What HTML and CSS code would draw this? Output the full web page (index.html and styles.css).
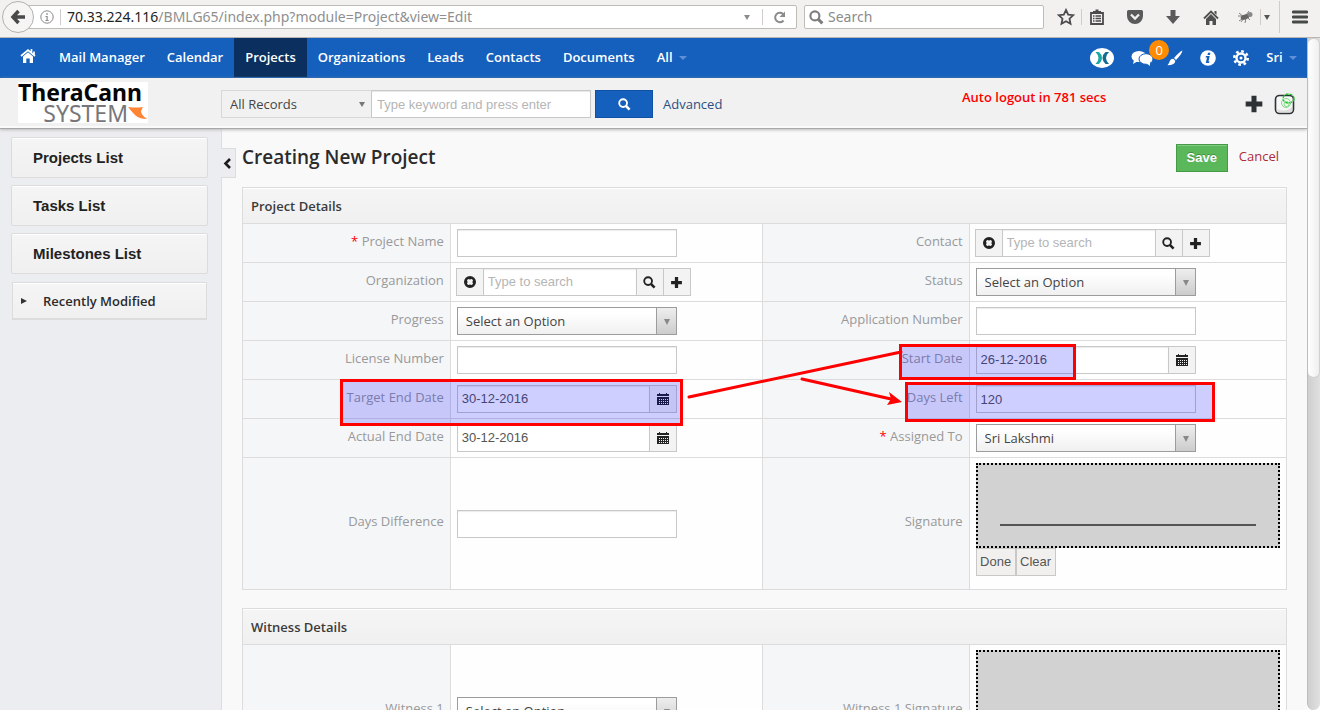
FILE: index.html
```html
<!DOCTYPE html>
<html lang="en">
<head>
<meta charset="utf-8">
<title>Creating New Project</title>
<link rel="stylesheet" href="styles.css">
</head>
<body>
<svg class="defs" aria-hidden="true">
  <symbol id="i-search" viewBox="0 0 14 14"><circle cx="5.5" cy="5.5" r="4.2" fill="none" stroke="currentColor" stroke-width="2"/><path d="M8.5 8.5L12.5 12.5" stroke="currentColor" stroke-width="2.8" fill="none"/></symbol>
  <symbol id="i-clear" viewBox="0 0 14 14"><path fill="currentColor" fill-rule="evenodd" d="M7 1a6 6 0 1 0 0 12A6 6 0 0 0 7 1zM4 5.2L5.2 4 7 4.6 8.8 4 10 5.2 9.4 7 10 8.8 8.8 10 7 9.4 5.2 10 4 8.8 4.6 7z"/></symbol>
  <symbol id="i-plus" viewBox="0 0 12 12"><path fill="currentColor" d="M4.5 1h3v3.5H11v3H7.5V11h-3V7.5H1v-3h3.5z"/></symbol>
  <symbol id="i-calendar" viewBox="0 0 14 14"><path fill="currentColor" d="M3 1h1v1h6V1h1v1h2v2H1V2h2zM1 5h12v8H1z"/><path stroke="#f3f3f3" stroke-width="1" stroke-dasharray="1 1" d="M3 7.500h9M3 9.500h9M3 11.500h9"/></symbol>
</svg>

<header class="toolbar">
  <button class="back" aria-label="Back"><svg width="16" height="16" viewBox="0 0 16 16"><path d="M8.500 2L3 8l5.500 6M3.500 8H15" fill="none" stroke="#4a4a4a" stroke-width="3.500"/></svg></button>
  <div class="address">
    <svg width="14" height="14" viewBox="0 0 14 14"><circle cx="7" cy="7" r="6.200" fill="none" stroke="#8a8a8a"/><path d="M6.300 3.200h1.500v1.500H6.300zM5.500 6h2.200v4h1v1H5.500v-1h1V7h-1z" fill="#8a8a8a"/></svg>
    <span class="rule"></span>
    <span class="url"><b>70.33.224.116</b>/BMLG65/index.php?module=Project&amp;view=Edit</span>
    <span class="tri"></span>
    <span class="rule"></span>
    <button class="plain" aria-label="Reload"><svg width="13" height="13" viewBox="0 0 13 13"><path d="M10.500 9.500A4.700 4.700 0 1 1 10 3" fill="none" stroke="#8b8b8b" stroke-width="2"/><path d="M12 .5v5.500H6.500z" fill="#8b8b8b"/></svg></button>
  </div>
  <label class="browser-search"><svg class="grey" width="15" height="15"><use href="#i-search"/></svg><input type="text" placeholder="Search" aria-label="Search the web"></label>
  <div class="tools">
    <button class="plain" aria-label="Bookmark"><svg width="18" height="18" viewBox="0 0 18 18"><path d="M9 2l2.200 4.600 5 .6-3.700 3.500 1 5L9 13.200l-4.500 2.500 1-5L1.800 7.200l5-.6z" fill="none" stroke="#4c4c4c" stroke-width="1.800"/></svg></button>
    <span class="rule"></span>
    <button class="plain wide" aria-label="Library"><svg width="16" height="16" viewBox="0 0 16 16"><path d="M2 4h12v11H2z" fill="none" stroke="#4c4c4c" stroke-width="1.800"/><path d="M4 2h2.500V.5h3V2H12v2H4z" fill="#4c4c4c"/><path d="M4 7h1.500M4 9.500h1.500M4 12h1.500M6.500 7H12M6.500 9.500H12M6.500 12H12" stroke="#4c4c4c" stroke-width="1.300"/></svg></button>
    <button class="plain wide" aria-label="Pocket"><svg width="18" height="16" viewBox="0 0 18 16"><path d="M2.500 1h13A1.500 1.500 0 0 1 17 2.500V7A8 8 0 0 1 1 7V2.500A1.500 1.500 0 0 1 2.500 1z" fill="#5a5a5a"/><path d="M5 5.500l4 4 4-4" fill="none" stroke="#f2f1f0" stroke-width="2.300"/></svg></button>
    <button class="plain wide" aria-label="Downloads"><svg width="16" height="16" viewBox="0 0 16 16"><path d="M5.500 1h5v6H15l-7 8-7-8h4.500z" fill="#5a5a5a"/></svg></button>
    <button class="plain wide" aria-label="Home"><svg width="18" height="17" viewBox="0 0 18 17"><path d="M2 9.500L9 2.500l7 7" fill="none" stroke="#4f4f4f" stroke-width="1.800"/><path d="M4 10l5-5 5 5v6h-3.500v-4h-3v4H4zM12.500 2h2v4l-2-2z" fill="#4f4f4f"/></svg></button>
    <button class="plain" aria-label="Add-on"><svg width="16" height="14" viewBox="0 0 16 14"><ellipse cx="7" cy="7" rx="4.500" ry="2.500" transform="rotate(-20 7 7)" fill="#666"/><circle cx="12" cy="4.500" r="2.500" fill="#888"/><path d="M1 3l5 4M0 6h6M3 12l4-5M7 13l1-5M12 10L9 7M4 9L1 11M8 5l3-4" stroke="#666" stroke-width=".8"/></svg></button>
    <span class="rule"></span>
    <span class="tri dark"></span>
    <span class="rule tall"></span>
    <button class="plain menu" aria-label="Menu"><svg width="16" height="14" viewBox="0 0 16 14"><path d="M1 2h14M1 7h14M1 12h14" stroke="#474b47" stroke-width="2.800" stroke-linecap="round"/></svg></button>
  </div>
</header>

<div class="viewport">
<div class="page">
  <nav class="nav">
    <a class="home" href="#" aria-label="Home"><svg width="16" height="16" viewBox="0 0 16 16"><path d="M1 8l7-6 7 6M11.500 1v4M14 3.500v3" fill="none" stroke="#fff" stroke-width="1.700"/><path d="M3 8.500l5-4.300 5 4.300V15H9.700v-4.500H6.300V15H3z" fill="#fff"/></svg></a>
    <a href="#">Mail Manager</a><a href="#">Calendar</a><a class="active" href="#">Projects</a><a href="#">Organizations</a><a href="#">Leads</a><a href="#">Contacts</a><a href="#">Documents</a><a href="#">All <i class="tri blue"></i></a>
    <div class="nav-icons">
      <a href="#" aria-label="Exchange"><svg width="24" height="20" viewBox="0 0 24 20"><ellipse cx="12" cy="10" rx="12" ry="10" fill="#fff"/><path d="M5.500 4H9q3 2.500 3 6t-3 6H5.500Q8.500 13 8.500 10T5.500 4z" fill="#1aa9a4"/><path d="M19 4h-3.500q-3 2.500-3 6t3 6H19q-3-3-3-6t3-6z" fill="#136b93"/></svg></a>
      <a class="chat" href="#" aria-label="Messages"><svg width="22" height="16" viewBox="0 0 22 16"><ellipse cx="8" cy="6.500" rx="7.500" ry="5.500" fill="#fff"/><path d="M3 10l-1 4 5-3z" fill="#fff"/><ellipse cx="15" cy="9" rx="7" ry="5.300" fill="#fff" stroke="#1560bd"/><path d="M15 13l4 3v-4z" fill="#fff"/></svg><span class="badge">0</span></a>
      <a href="#" aria-label="Theme"><svg width="16" height="16" viewBox="0 0 16 16"><path d="M15.500.5q-1 4-6.500 9.500L7 8Q12 2 15.500.5z" fill="#fff"/><path d="M6.300 8.700l2 2q0 4.300-7.800 4.600Q2.300 13 2.800 11q1-2.500 3.500-2.300z" fill="#fff"/></svg></a>
      <a href="#" aria-label="Information"><svg width="16" height="16" viewBox="0 0 16 16"><circle cx="8" cy="8" r="7.800" fill="#fff"/><path d="M8 2.800h2.400L10 5H7.500zM6 6h3.700l-1.200 5.500h1L9 13H5.800l1.200-5.500H5.500z" fill="#1560bd"/></svg></a>
      <a href="#" aria-label="Settings"><svg width="16" height="16" viewBox="0 0 16 16"><circle cx="8" cy="8" r="4.500" fill="none" stroke="#fff" stroke-width="2.400"/><circle cx="8" cy="8" r="6.700" fill="none" stroke="#fff" stroke-width="2.600" stroke-dasharray="2.630 2.630"/><circle cx="8" cy="8" r="1.500" fill="#fff"/></svg></a>
      <a class="user" href="#">Sri <i class="tri blue"></i></a>
    </div>
  </nav>

  <div class="search-bar">
    <div class="brand"><div class="logo"><span class="logo-top">TheraCann</span><span class="logo-sub">SYSTEM<svg width="20" height="14" viewBox="0 0 20 14"><path d="M0 1Q9 2 15 1L13 5Q13 9 19 13 11 13 7 9 4 6 0 1z" fill="#ff8433"/></svg></span></div></div>
    <div class="record-pick"><select aria-label="Record type"><option>All Records</option></select></div>
    <input class="keyword" type="text" placeholder="Type keyword and press enter" aria-label="Keyword">
    <button class="go" aria-label="Search"><svg width="13" height="13"><use href="#i-search"/></svg></button>
    <a class="advanced" href="#">Advanced</a>
    <strong class="logout">Auto logout in 781 secs</strong>
    <div class="quick">
      <button class="plain" aria-label="Quick create"><svg width="20" height="20"><use href="#i-plus"/></svg></button>
      <button class="plain" aria-label="Notebook"><svg width="22" height="22" viewBox="0 0 22 22"><rect x="1.500" y="2.500" width="18" height="18" rx="4" fill="#f7f7f7" stroke="#2d3236" stroke-width="1.600"/><path d="M3 16q8 4 15-2v5H4z" fill="#ddd"/><ellipse cx="14.500" cy="5.500" rx="5.500" ry="4.500" fill="none" stroke="#22c32e" stroke-width="1.400" stroke-dasharray="3 1"/><circle cx="12" cy="10" r="4.500" fill="none" stroke="#7bdc7f"/><circle cx="12.500" cy="11" r="2.500" fill="none" stroke="#7bdc7f"/></svg></button>
    </div>
  </div>

  <div class="body">
    <aside class="side">
      <a class="side-link" href="#">Projects List</a>
      <a class="side-link" href="#">Tasks List</a>
      <a class="side-link" href="#">Milestones List</a>
      <button class="recent"><i></i>Recently Modified</button>
    </aside>
    <main class="main">
      <button class="collapse" aria-label="Collapse sidebar"><svg width="9" height="13" viewBox="0 0 9 13"><path d="M7 2L2.500 6.500 7 11" fill="none" stroke="#1c1c1c" stroke-width="2.600"/></svg></button>
      <form>
        <div class="title-row"><h1>Creating New Project</h1><button class="save" type="button">Save</button><a class="cancel" href="#">Cancel</a></div>

        <section class="panel">
          <h2>Project Details</h2>
          <table>
            <colgroup><col class="c1"><col class="c2"><col class="c3"><col></colgroup>
            <tr>
              <th><label for="name"><em>*</em> Project Name</label></th><td><input class="field" id="name" type="text"></td>
              <th><label for="contact">Contact</label></th><td><div class="lookup"><button type="button" aria-label="Clear contact"><svg width="14" height="14"><use href="#i-clear"/></svg></button><input id="contact" type="text" placeholder="Type to search"><button type="button" aria-label="Find contact"><svg width="13" height="13"><use href="#i-search"/></svg></button><button type="button" aria-label="Add contact"><svg width="13" height="13"><use href="#i-plus"/></svg></button></div></td>
            </tr>
            <tr>
              <th><label for="org">Organization</label></th><td><div class="lookup"><button type="button" aria-label="Clear organization"><svg width="14" height="14"><use href="#i-clear"/></svg></button><input id="org" type="text" placeholder="Type to search"><button type="button" aria-label="Find organization"><svg width="13" height="13"><use href="#i-search"/></svg></button><button type="button" aria-label="Add organization"><svg width="13" height="13"><use href="#i-plus"/></svg></button></div></td>
              <th><label for="status">Status</label></th><td><div class="pick"><select id="status"><option>Select an Option</option></select></div></td>
            </tr>
            <tr>
              <th><label for="progress">Progress</label></th><td><div class="pick"><select id="progress"><option>Select an Option</option></select></div></td>
              <th><label for="appno">Application Number</label></th><td><input class="field" id="appno" type="text"></td>
            </tr>
            <tr>
              <th><label for="license">License Number</label></th><td><input class="field" id="license" type="text"></td>
              <th><label for="start">Start Date</label></th><td><div class="date"><input id="start" type="text" value="26-12-2016"><button type="button" aria-label="Pick start date"><svg width="14" height="14"><use href="#i-calendar"/></svg></button></div></td>
            </tr>
            <tr>
              <th><label for="target">Target End Date</label></th><td><div class="date"><input id="target" type="text" value="30-12-2016"><button type="button" aria-label="Pick target end date"><svg width="14" height="14"><use href="#i-calendar"/></svg></button></div></td>
              <th><label for="left">Days Left</label></th><td><input class="field" id="left" type="text" value="120"></td>
            </tr>
            <tr>
              <th><label for="actual">Actual End Date</label></th><td><div class="date"><input id="actual" type="text" value="30-12-2016"><button type="button" aria-label="Pick actual end date"><svg width="14" height="14"><use href="#i-calendar"/></svg></button></div></td>
              <th><label for="owner"><em>*</em> Assigned To</label></th><td><div class="pick"><select id="owner"><option>Sri Lakshmi</option></select></div></td>
            </tr>
            <tr>
              <th><label for="diff">Days Difference</label></th><td><input class="field" id="diff" type="text"></td>
              <th>Signature</th><td><div class="pad"></div><div class="pad-actions"><button type="button">Done</button><button type="button">Clear</button></div></td>
            </tr>
          </table>
          <div class="mark mark-target"></div>
          <div class="mark mark-start"></div>
          <div class="mark mark-left"></div>
          <svg class="arrows" width="220" height="60" viewBox="0 0 220 60"><path d="M4 49L216 4M117 31L206 51" fill="none" stroke="#f00" stroke-width="3" stroke-linecap="round"/><path d="M217 54l-15 3 4-6-2-7z" fill="#f00"/></svg>
        </section>

        <section class="panel">
          <h2>Witness Details</h2>
          <table>
            <colgroup><col class="c1"><col class="c2"><col class="c3"><col></colgroup>
            <tr>
              <th><label for="w1">Witness 1</label></th><td><div class="pick"><select id="w1"><option>Select an Option</option></select></div></td>
              <th>Witness 1 Signature</th><td><div class="pad"></div><div class="pad-actions"><button type="button">Done</button><button type="button">Clear</button></div></td>
            </tr>
          </table>
        </section>
      </form>
    </main>
  </div>
</div>
<div class="scroll"><div class="thumb"></div></div>
</div>
</body>
</html>
```
FILE: styles.css
```css
* { box-sizing: border-box; }
body {
  margin: 0;
  height: 100vh;
  padding: 0 4px 4px 0;
  display: flex;
  flex-direction: column;
  overflow: hidden;
  background: #fff;
  font: 13px/20px "Open Sans", "Noto Sans", sans-serif;
  color: #333;
}
.defs { display: none; }
svg { display: block; flex: none; }
a { text-decoration: none; color: inherit; }
button, input, select { font: inherit; color: inherit; margin: 0; border-radius: 0; }
button { cursor: pointer; }
.plain { border: 0; background: none; padding: 0; display: flex; align-items: center; justify-content: center; }

/* Browser toolbar */
.toolbar {
  height: 38px;
  flex: none;
  display: flex;
  align-items: flex-start;
  padding: 5px 12px 0 18px;
  background: #f2f1f0;
  border-bottom: 1px solid #b9b6b3;
  position: relative;
  font: 14px/22px "Noto Sans", sans-serif;
}
.back {
  position: absolute;
  left: 2px;
  top: 1px;
  width: 32px;
  height: 32px;
  padding: 0 0 0 7px;
  border: 1px solid #b5b1ad;
  border-radius: 50%;
  background: #f6f5f4;
}
.address, .browser-search {
  height: 24px;
  border: 1px solid #bfbbb7;
  border-radius: 2px;
  background: #fff;
  display: flex;
  align-items: center;
}
.address { flex: 1; max-width: 779px; padding: 0 10px 0 21px; gap: 6px; }
.url { flex: 1; color: #8f8f8f; white-space: nowrap; overflow: hidden; }
.url b { font-weight: 400; color: #222; }
.rule { width: 1px; height: 16px; background: #cfccc9; flex: none; }
.address .tri { margin-right: 6px; }
.address .plain { margin-left: 4px; }
.tri {
  display: inline-block;
  border: solid transparent;
  border-width: 5px 3px 0;
  border-top-color: #8c8c8c;
  flex: none;
}
.tri.dark { border-top-color: #555; }
.tri.blue { border-width: 4px 4px 0; border-top-color: #5f8fd6; margin: 0 0 2px 3px; vertical-align: middle; }
.browser-search { width: 240px; margin-left: 7px; padding: 0 4px; gap: 4px; }
.browser-search input { border: 0; outline: 0; background: none; flex: 1; min-width: 0; padding: 0; }
.browser-search input::placeholder { color: #8b8b8b; opacity: 1; }
.grey { color: #7d7d7d; }
.tools { display: flex; align-items: center; height: 24px; margin-left: auto; }
.tools .rule { margin: 0 6px; }
.tools .wide { width: 38px; }
.tools .wide:nth-of-type(2) { width: 18px; margin-right: 10px; }
.tools .tall { height: 32px; margin: 0 12px 0 9px; }
.tools .plain:nth-of-type(6) { margin-left: 8px; }
.tools .tri { margin-left: -3px; }

/* Page and scroll bar */
.viewport { flex: 1; min-height: 0; display: flex; overflow: hidden; }
.page { flex: 1; min-width: 0; display: flex; flex-direction: column; }
.scroll { width: 13px; background: linear-gradient(90deg, #cfcfcf, #e0e0e0); border-left: 1px solid #bdbdbd; border-radius: 0 0 7px 7px; }
.thumb { height: 340px; border-radius: 7px; background: linear-gradient(90deg, #fff, #f0efee); border: 1px solid #d2d0ce; border-left: 0; }

/* Navigation */
.nav {
  display: flex;
  height: 40px;
  flex: none;
  padding-left: 10px;
  background: #1560bd;
  border-bottom: 1px solid #1257ad;
  color: #fff;
  font-weight: 600;
  line-height: 39px;
  white-space: nowrap;
}
.nav > a { padding: 0 11px; }
.nav > .home { padding: 10px 12px 0 10px; }
.nav .active { background: #0b2f5e; }
.nav-icons { display: flex; align-items: center; margin-left: auto; padding-right: 10px; gap: 17px; }
.chat { position: relative; margin-right: -3px; }
.badge {
  position: absolute;
  left: 18px;
  top: -10px;
  width: 20px;
  height: 20px;
  border-radius: 50%;
  background: #ff8c00;
  font-weight: 400;
  line-height: 20px;
  text-align: center;
}

/* Search bar */
.search-bar {
  position: relative;
  z-index: 1;
  height: 51px;
  flex: none;
  display: flex;
  align-items: center;
  background: #f1f1f1;
  border-bottom: 1px solid #a8a8a8;
  box-shadow: inset 0 -2px #fafafa, 0 1px 3px #bbb;
  padding-top: 2px;
}
.brand { width: 221px; padding-left: 18px; }
.logo { width: 130px; height: 41px; background: #fff; display: flex; flex-direction: column; white-space: nowrap; font-family: "Noto Sans", sans-serif; margin-bottom: 3px; }
.logo-top { font-weight: 700; font-size: 23px; line-height: 21px; color: #050505; }
.logo-sub { display: flex; align-items: center; justify-content: flex-end; font-size: 23px; line-height: 20px; color: #77777a; }
.record-pick { width: 151px; height: 28px; border: 1px solid #d8d8d8; border-right-color: #c8c8c8; position: relative; }
.record-pick select { width: 100%; height: 100%; appearance: none; border: 0; background: transparent; padding: 0 8px; color: #444; }
.record-pick::after {
  content: "";
  position: absolute;
  right: 6px;
  top: 11px;
  border: solid transparent;
  border-width: 5px 3px 0;
  border-top-color: #777;
}
.keyword { width: 220px; height: 28px; margin-left: -1px; border: 1px solid #c8c8c8; padding: 0 5px; font-family: "Liberation Sans", sans-serif; box-shadow: inset 0 1px 1px #e6e6e6; }
.go { width: 58px; height: 28px; margin: 0 10px 0 4px; padding: 0; border: 1px solid #0f51a4; background: #1560bd; color: #fff; display: flex; align-items: center; justify-content: center; }
.advanced { color: #2c4f83; }
.logout { color: #f00; font-weight: 600; margin: 0 auto; padding: 0 0 14px 102px; }
.quick { display: flex; align-items: center; gap: 10px; padding-right: 11px; color: #2d3236; }
::placeholder { color: #b5b5b5; opacity: 1; }

/* Sidebar */
.body { flex: 1; min-height: 0; display: flex; }
.side { width: 222px; flex: none; background: #ecedf1; border-right: 1px solid #dcdde0; padding: 8px 13px 0 11px; display: flex; flex-direction: column; gap: 7px; }
.side-link, .recent { border: 1px solid #dcdcdc; background: linear-gradient(#f5f5f5, #f0f0f0); box-shadow: inset 0 1px #fff; }
.side-link { padding: 10px 21px; line-height: 19px; font-family: "Liberation Sans", Arial, sans-serif; font-weight: 700; font-size: 15px; color: #222; border-radius: 2px; }
.recent { display: flex; align-items: center; margin: 1px 1px 0 1px; height: 38px; border-bottom-width: 2px; padding: 0 8px; gap: 16px; font-weight: 600; color: #2b2b2b; }
.recent i { border: solid transparent; border-width: 3px 0 3px 6px; border-left-color: #333; }

/* Form area */
.main { flex: 1; min-width: 0; position: relative; background: #f9f9f9; padding: 14px 20px 0; }
.collapse { position: absolute; left: -1px; top: 19px; width: 15px; height: 30px; padding: 0 0 0 2px; border: 1px solid #dcdcdc; border-left: 0; background: #ecedf1; }
.title-row { display: flex; align-items: flex-start; height: 44px; }
h1 { margin: 0 auto 0 0; font-size: 19px; line-height: 28px; font-weight: 600; color: #2b2b2b; }
.save { width: 52px; height: 28px; margin: 1px 11px 0 0; padding: 0; border: 1px solid #459a45; background: #5ab75a; color: #fff; font-family: "Liberation Sans", Arial, sans-serif; font-weight: 700; text-shadow: 0 -1px rgba(0,0,0,.25); box-shadow: inset 0 1px rgba(255,255,255,.25); }
.cancel { color: #b02a3a; line-height: 26px; padding-right: 8px; }
.panel { position: relative; margin-bottom: 18px; }
h2 { margin: 0; height: 36px; padding: 0 8px; font-size: 13px; line-height: 37px; font-weight: 600; color: #3b3b3b; border: 1px solid #dcdcdc; border-bottom: 0; background: linear-gradient(#f5f5f5, #f0f0f0); box-shadow: inset 0 1px #fff; }
table { width: 100%; table-layout: fixed; border-collapse: collapse; background: #fefefe; }
.c1 { width: 19.9%; }
.c2 { width: 29.9%; }
.c3 { width: 19.8%; }
th, td { border: 1px solid #dcdcdc; padding: 5px 6px; height: 39px; text-align: left; vertical-align: middle; }
th { background: #f5f6f8; font-weight: 400; color: #999; text-align: right; padding: 3px 6px 8px; }
th em { color: #f00; font-style: normal; }
td input, td button { font-family: "Liberation Sans", Arial, sans-serif; color: #555; }
.field, .date, .pick { width: 220px; height: 28px; display: flex; }
.field, .date input, .lookup input { border: 1px solid #c8c8c8; background: #fff; padding: 0 4px; box-shadow: inset 0 1px 1px #ebebeb; }
.date input { flex: 1; min-width: 0; }
.date button, .lookup button { width: 28px; padding: 0; margin-left: -1px; border: 1px solid #c8c8c8; background: #f3f3f3; color: #222; display: flex; align-items: center; justify-content: center; }
.lookup { display: flex; height: 28px; margin-left: -1px; }
.lookup input { width: 154px; margin-left: -1px; }
.lookup button:first-child { margin-left: 0; }
.pick { border: 1px solid #9c9c9c; background: linear-gradient(#fff 20%, #f0f0f0); position: relative; }
.pick select { appearance: none; border: 0; background: none; width: 100%; padding: 0 8px; color: #444; }
.pick::after {
  content: "";
  position: absolute;
  right: 0;
  top: 0;
  width: 19px;
  height: 26px;
  border-left: 1px solid #9c9c9c;
  background: linear-gradient(#eee, #ccc);
  pointer-events: none;
}
.pick::before {
  content: "";
  position: absolute;
  z-index: 1;
  right: 6px;
  top: 11px;
  border: solid transparent;
  border-width: 6px 3px 0;
  border-top-color: #888;
  pointer-events: none;
}
.pad { height: 85px; border: 2px dotted #000; background: #d2d2d2; padding: 59px 22px 0; }
.pad::before { content: ""; display: block; border-top: 2px solid #555; }
.pad-actions { display: flex; margin-bottom: 8px; }
.pad-actions button { width: 40px; height: 28px; padding: 0; border: 1px solid #c8c8c8; background: #f1f0ee; }

/* Annotations over the form */
.mark { position: absolute; border: 3px solid #f00; background: rgba(0,0,255,.19); pointer-events: none; }
.mark-target { left: 98px; top: 192px; width: 343px; height: 47px; }
.mark-start { left: 657px; top: 157px; width: 177px; height: 36px; }
.mark-left { left: 663px; top: 195px; width: 310px; height: 40px; }
.arrows { position: absolute; left: 443px; top: 161px; pointer-events: none; }
```
